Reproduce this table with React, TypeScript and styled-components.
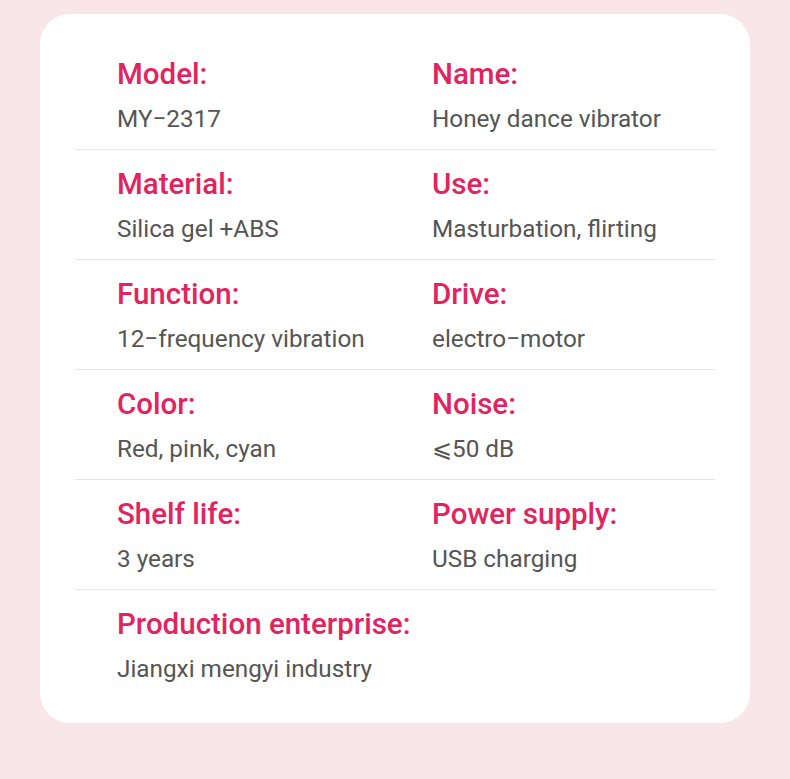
import styled, { createGlobalStyle } from "styled-components";

interface Spec {
  label: string;
  value: string;
}

const rows: Spec[][] = [
  [
    { label: "Model:", value: "MY\u22122317" },
    { label: "Name:", value: "Honey dance vibrator" },
  ],
  [
    { label: "Material:", value: "Silica gel +ABS" },
    { label: "Use:", value: "Masturbation, flirting" },
  ],
  [
    { label: "Function:", value: "12\u2212frequency vibration" },
    { label: "Drive:", value: "electro\u2212motor" },
  ],
  [
    { label: "Color:", value: "Red, pink, cyan" },
    { label: "Noise:", value: "\u2A7D50 dB" },
  ],
  [
    { label: "Shelf life:", value: "3 years" },
    { label: "Power supply:", value: "USB charging" },
  ],
  [{ label: "Production enterprise:", value: "Jiangxi mengyi industry" }],
];

const App = () => {
  return (
    <>
      <GlobalStyle />
      <Page>
        <Card>
          {rows.map((row, i) => (
            <Row key={i} $last={i === rows.length - 1}>
              {row.map((spec) => (
                <Cell key={spec.label}>
                  <Label>{spec.label}</Label>
                  <Value>{spec.value}</Value>
                </Cell>
              ))}
            </Row>
          ))}
        </Card>
      </Page>
    </>
  );
};

const GlobalStyle = createGlobalStyle`
  body {
    margin: 0;
    background: #f8e6e9;
    font-family: Roboto, "Noto Sans", sans-serif;
  }
`;

const Page = styled.main`
  min-height: 779px;
  padding: 14px 40px 0;
  box-sizing: border-box;
  background: #f8e6e9;
`;

const Card = styled.section`
  background: #fff;
  border-radius: 30px;
  padding: 26px 35px 24px;
`;

const Row = styled.div<{ $last?: boolean }>`
  display: grid;
  grid-template-columns: 315px 1fr;
  padding: 19px 0 18.5px 42px;
  border-bottom: ${(p) => (p.$last ? "none" : "1px solid #e6e6e6")};
`;

const Cell = styled.div`
  display: flex;
  flex-direction: column;
  white-space: nowrap;
`;

const Label = styled.div`
  font-size: 29.5px;
  line-height: 30px;
  font-weight: 500;
  color: #e1245f;
  margin-bottom: 16.5px;
`;

const Value = styled.div`
  font-size: 24.3px;
  line-height: 25px;
  color: #555;
`;

export default App;
